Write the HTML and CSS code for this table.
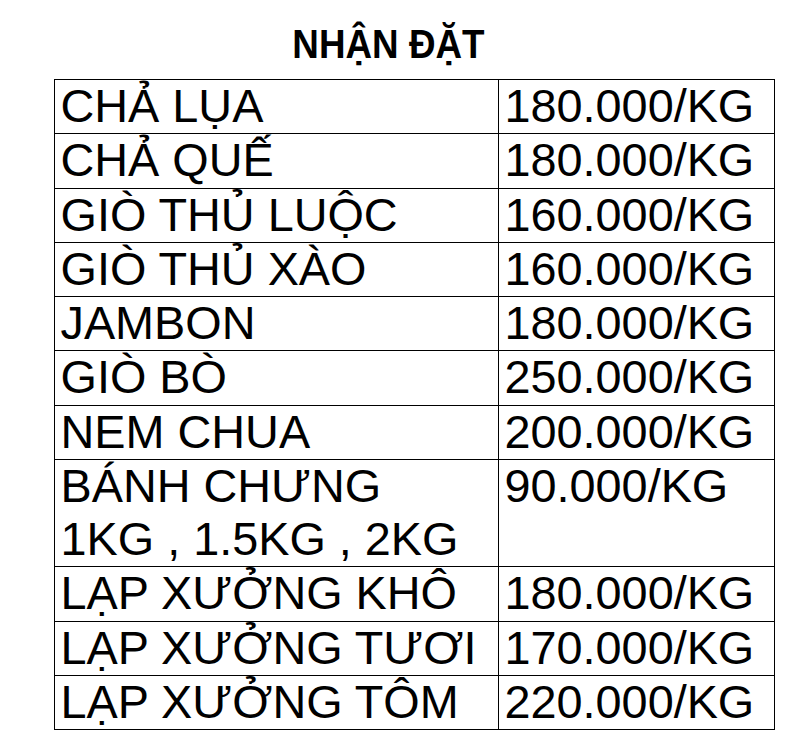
FILE: index.html
```html
<!DOCTYPE html>
<html lang="vi">
<head>
<meta charset="utf-8">
<title>NHẬN ĐẶT</title>
<link rel="stylesheet" href="styles.css">
</head>
<body>
<div class="title"><span class="title-text">NHẬN ĐẶT</span></div>
<table class="price-table">
  <colgroup><col class="col-name"><col class="col-price"></colgroup>
  <tr><td>CHẢ LỤA</td><td>180.000/KG</td></tr>
  <tr><td>CHẢ QUẾ</td><td>180.000/KG</td></tr>
  <tr><td>GIÒ THỦ LUỘC</td><td>160.000/KG</td></tr>
  <tr><td>GIÒ THỦ XÀO</td><td>160.000/KG</td></tr>
  <tr><td>JAMBON</td><td>180.000/KG</td></tr>
  <tr><td>GIÒ BÒ</td><td>250.000/KG</td></tr>
  <tr><td>NEM CHUA</td><td>200.000/KG</td></tr>
  <tr><td>BÁNH CHƯNG<br>1KG , 1.5KG , 2KG</td><td>90.000/KG</td></tr>
  <tr><td>LẠP XƯỞNG KHÔ</td><td>180.000/KG</td></tr>
  <tr><td>LẠP XƯỞNG TƯƠI</td><td>170.000/KG</td></tr>
  <tr><td>LẠP XƯỞNG TÔM</td><td>220.000/KG</td></tr>
</table>
</body>
</html>
```
FILE: styles.css
```css
html, body {
  margin: 0;
  padding: 0;
  background: #fff;
  color: #000;
  font-family: "Liberation Sans", Arial, sans-serif;
}

.title {
  margin-top: 24px;
  height: 40px;
  line-height: 40px;
  text-align: center;
  padding-right: 9px;
}

.title-text {
  display: inline-block;
  font-size: 40px;
  font-weight: bold;
  transform: scaleX(0.92);
}

.price-table {
  margin-top: 15px;
  margin-left: 53.5px;
  width: 720px;
  border-collapse: collapse;
  table-layout: fixed;
  font-size: 46.8px;
  line-height: 53.25px;
}

.col-name { width: 444px; }
.col-price { width: 276px; }

.price-table td {
  border: 1px solid #000;
  padding: 0 0 0 6px;
  vertical-align: top;
  white-space: nowrap;
}
```
